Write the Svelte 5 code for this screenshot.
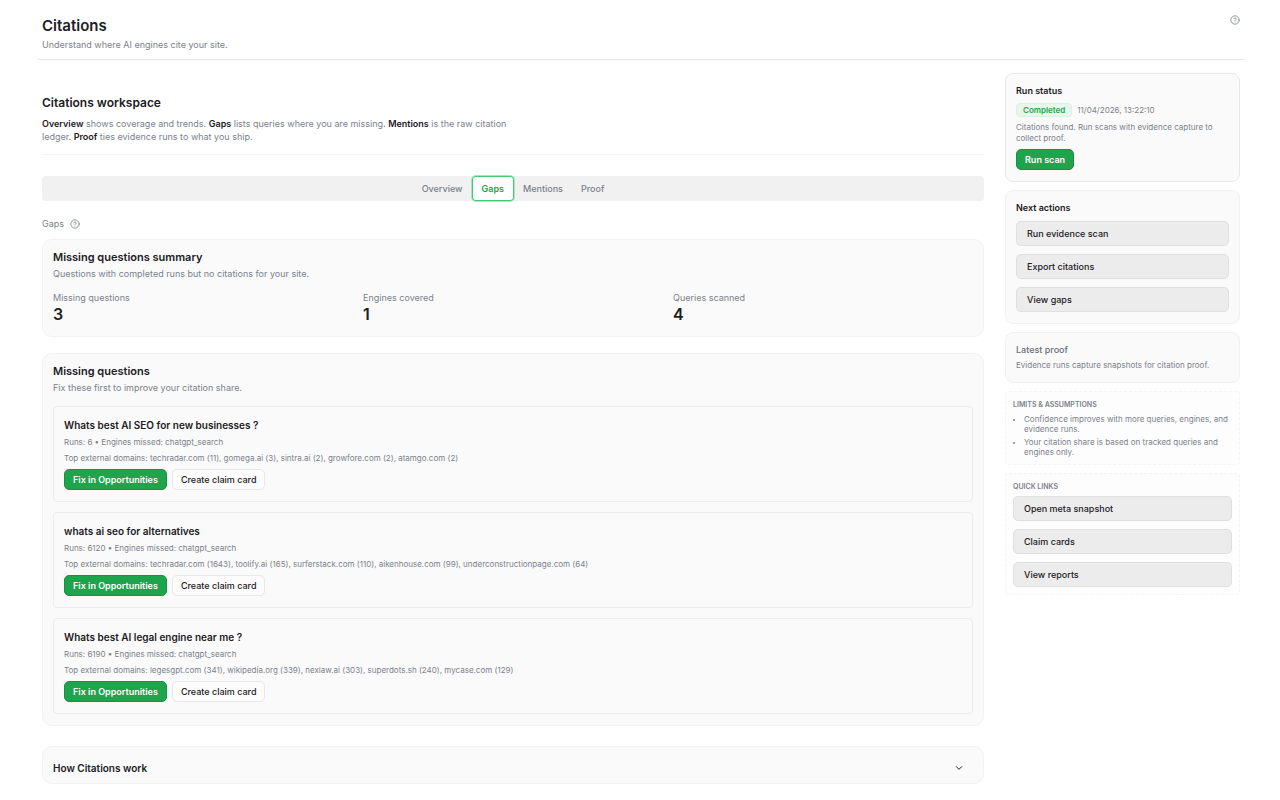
<script lang="ts">
  interface Question {
    title: string;
    runs: number;
    engines: string;
    domains: string;
  }

  const tabs = ['Overview', 'Gaps', 'Mentions', 'Proof'];
  let activeTab = $state('Gaps');

  const stats = [
    { label: 'Missing questions', value: 3 },
    { label: 'Engines covered', value: 1 },
    { label: 'Queries scanned', value: 4 },
  ];

  const questions: Question[] = [
    {
      title: 'Whats best AI SEO for new businesses ?',
      runs: 6,
      engines: 'chatgpt_search',
      domains: 'techradar.com (11), gomega.ai (3), sintra.ai (2), growfore.com (2), atamgo.com (2)',
    },
    {
      title: 'whats ai seo for alternatives',
      runs: 6120,
      engines: 'chatgpt_search',
      domains:
        'techradar.com (1643), toolify.ai (165), surferstack.com (110), aikenhouse.com (99), underconstructionpage.com (64)',
    },
    {
      title: 'Whats best AI legal engine near me ?',
      runs: 6190,
      engines: 'chatgpt_search',
      domains:
        'legesgpt.com (341), wikipedia.org (339), nexlaw.ai (303), superdots.sh (240), mycase.com (129)',
    },
  ];

  const nextActions = ['Run evidence scan', 'Export citations', 'View gaps'];
  const quickLinks = ['Open meta snapshot', 'Claim cards', 'View reports'];
</script>

{#snippet helpIcon()}
  <svg class="help-icon" viewBox="0 0 24 24" fill="none" stroke="currentColor" stroke-width="2" stroke-linecap="round" stroke-linejoin="round" aria-hidden="true">
    <circle cx="12" cy="12" r="10" />
    <path d="M9.09 9a3 3 0 0 1 5.83 1c0 2-3 3-3 3" />
    <path d="M12 17h.01" />
  </svg>
{/snippet}

<div class="page">
  <header class="page-head">
    <div>
      <h1>Citations</h1>
      <p class="sub">Understand where AI engines cite your site.</p>
    </div>
    <button class="help" aria-label="Help">{@render helpIcon()}</button>
  </header>

  <div class="layout">
    <main>
      <section class="intro">
        <h2>Citations workspace</h2>
        <p>
          <strong>Overview</strong> shows coverage and trends. <strong>Gaps</strong> lists queries where you are missing.
          <strong>Mentions</strong> is the raw citation ledger. <strong>Proof</strong> ties evidence runs to what you ship.
        </p>
      </section>

      <div class="tabs" role="tablist">
        {#each tabs as tab (tab)}
          <button
            class="tab"
            class:active={tab === activeTab}
            role="tab"
            aria-selected={tab === activeTab}
            onclick={() => (activeTab = tab)}>{tab}</button>
        {/each}
      </div>

      <div class="section-label">
        <span>Gaps</span>
        <button class="help" aria-label="About gaps">{@render helpIcon()}</button>
      </div>

      <section class="card">
        <h3>Missing questions summary</h3>
        <p class="sub">Questions with completed runs but no citations for your site.</p>
        <dl class="stats">
          {#each stats as s (s.label)}
            <div>
              <dt>{s.label}</dt>
              <dd>{s.value}</dd>
            </div>
          {/each}
        </dl>
      </section>

      <section class="card missing">
        <h3>Missing questions</h3>
        <p class="sub">Fix these first to improve your citation share.</p>
        <ul class="questions">
          {#each questions as q (q.title)}
            <li>
              <h4>{q.title}</h4>
              <p class="meta">Runs: {q.runs} • Engines missed: {q.engines}</p>
              <p class="meta">Top external domains: {q.domains}</p>
              <div class="actions">
                <button class="btn primary">Fix in Opportunities</button>
                <button class="btn">Create claim card</button>
              </div>
            </li>
          {/each}
        </ul>
      </section>

      <details class="card how">
        <summary>
          <span>How Citations work</span>
          <svg class="chevron" viewBox="0 0 24 24" fill="none" stroke="currentColor" stroke-width="3" stroke-linecap="round" stroke-linejoin="round" aria-hidden="true">
            <path d="m4 8 8 8 8-8" />
          </svg>
        </summary>
      </details>
    </main>

    <aside>
      <section class="side-card status">
        <h5>Run status</h5>
        <div class="run">
          <span class="badge">Completed</span>
          <span class="meta">11/04/2026, 13:22:10</span>
        </div>
        <p class="note">Citations found. Run scans with evidence capture to collect proof.</p>
        <button class="btn primary">Run scan</button>
      </section>

      <section class="side-card">
        <h5>Next actions</h5>
        <div class="stack">
          {#each nextActions as action (action)}
            <button class="row-btn">{action}</button>
          {/each}
        </div>
      </section>

      <section class="side-card proof">
        <h5>Latest proof</h5>
        <p class="note">Evidence runs capture snapshots for citation proof.</p>
      </section>

      <section class="side-box">
        <h6>Limits &amp; assumptions</h6>
        <ul class="limits">
          <li>Confidence improves with more queries, engines, and evidence runs.</li>
          <li>Your citation share is based on tracked queries and engines only.</li>
        </ul>
      </section>

      <section class="side-box">
        <h6>Quick links</h6>
        <div class="stack">
          {#each quickLinks as link (link)}
            <button class="row-btn">{link}</button>
          {/each}
        </div>
      </section>
    </aside>
  </div>
</div>

<style>
  :global(body) {
    margin: 0;
    background: #fff;
  }
  :global(h1, h2, h3, h4, h5, h6, p, ul, dl, dd) {
    margin: 0;
    padding: 0;
  }
  .page {
    --text: #1c2024;
    --muted: #7b828b;
    --line: #ececec;
    --soft: #fafafa;
    --green: #1ea44c;
    font-family: Inter, 'Liberation Sans', sans-serif;
    font-size: 9px;
    line-height: 12px;
    color: var(--text);
    padding: 0 36px 16px 38px;
  }
  button {
    font: inherit;
    color: inherit;
    cursor: pointer;
  }
  .page-head {
    display: flex;
    justify-content: space-between;
    align-items: flex-start;
    padding: 15px 4px 8px;
    border-bottom: 1px solid #e6e6e8;
  }
  h1 {
    font-size: 15px;
    line-height: 21px;
    font-weight: 600;
  }
  .sub {
    margin-top: 4px;
    color: var(--muted);
  }
  .page-head .sub {
    margin-top: 3px;
  }
  .help {
    display: flex;
    padding: 0;
    border: 0;
    background: none;
    color: var(--muted);
  }
  .help-icon {
    width: 10px;
    height: 10px;
  }
  .layout {
    display: grid;
    grid-template-columns: minmax(0, 1fr) 235px;
    gap: 21px;
    align-items: start;
    padding: 13px 4px 0;
  }
  .intro {
    padding: 23px 0 11px;
    border-bottom: 1px solid #f5f5f5;
  }
  h2 {
    font-size: 12px;
    line-height: 14px;
    font-weight: 600;
  }
  .intro p {
    max-width: 490px;
    margin-top: 7px;
    line-height: 13px;
    color: var(--muted);
  }
  .intro strong {
    font-weight: 600;
    color: var(--text);
  }
  .tabs {
    display: flex;
    justify-content: center;
    margin-top: 21px;
    border-radius: 4px;
    background: #f1f1f1;
  }
  .tab {
    padding: 5px 9px;
    border: 0;
    border-radius: 4px;
    background: none;
    line-height: 15px;
    font-weight: 500;
    color: var(--muted);
  }
  .tab.active {
    padding: 5px 10px;
    background: #fff;
    box-shadow: inset 0 0 0 1px #43c873, 0 0 0 1px #a9e6bf;
    font-weight: 600;
    color: var(--green);
  }
  .section-label {
    display: flex;
    align-items: center;
    gap: 6px;
    margin: 17px 0 9px;
    color: var(--muted);
  }
  .card {
    padding: 10px 10px 11px;
    border: 1px solid #f2f2f2;
    border-radius: 10px;
    background: var(--soft);
  }
  .missing {
    margin-top: 16px;
  }
  h3 {
    font-size: 11px;
    line-height: 14px;
    font-weight: 600;
  }
  .stats {
    display: grid;
    grid-template-columns: repeat(3, 1fr);
    gap: 10px;
    margin-top: 12px;
  }
  dt {
    color: var(--muted);
  }
  dd {
    font-size: 16px;
    line-height: 21px;
    font-weight: 600;
  }
  .questions {
    display: grid;
    gap: 10px;
    margin-top: 12px;
    list-style: none;
  }
  .questions li {
    padding: 11px 10px;
    border: 1px solid var(--line);
    border-radius: 4px;
  }
  h4 {
    font-size: 10px;
    line-height: 14px;
    font-weight: 600;
  }
  .meta {
    font-size: 8px;
    line-height: 12px;
    color: var(--muted);
  }
  .questions .meta {
    margin-top: 4px;
  }
  .actions {
    display: flex;
    gap: 5px;
    margin-top: 5px;
  }
  .btn {
    padding: 3px 8px;
    border: 1px solid #e8e8e8;
    border-radius: 5px;
    background: #fcfcfc;
    line-height: 13px;
    font-weight: 500;
  }
  .btn.primary {
    border-color: #17923f;
    background: var(--green);
    font-weight: 600;
    color: #fff;
  }
  .how {
    margin-top: 20px;
    padding: 0;
  }
  .how summary {
    display: flex;
    justify-content: space-between;
    align-items: center;
    padding: 14px 20px 8px 10px;
    font-size: 10px;
    line-height: 14px;
    font-weight: 600;
    list-style: none;
    cursor: pointer;
  }
  .chevron {
    width: 8px;
    height: 8px;
  }
  aside {
    display: grid;
    gap: 8px;
  }
  .side-card {
    padding: 10px 10px 11px;
    border: 1px solid #f1f1f1;
    border-radius: 8px;
    background: var(--soft);
  }
  .side-card.status {
    border-color: #e8e8e8;
  }
  h5 {
    font-size: 9px;
    line-height: 13px;
    font-weight: 600;
  }
  .run {
    display: flex;
    align-items: center;
    gap: 5px;
    margin-top: 6px;
  }
  .badge {
    padding: 0 6px;
    border: 1px solid #d8f3e0;
    border-radius: 4px;
    background: #e6f8ec;
    font-size: 8px;
    line-height: 12px;
    font-weight: 600;
    color: var(--green);
  }
  .note {
    font-size: 8px;
    line-height: 11px;
    color: var(--muted);
  }
  .status .note {
    margin: 5px 0;
  }
  .stack {
    display: grid;
    gap: 8px;
    margin-top: 7px;
  }
  .row-btn {
    padding: 5px 10px;
    border: 1px solid #dfdfdf;
    border-radius: 5px;
    background: #ececec;
    line-height: 13px;
    font-weight: 500;
    text-align: left;
  }
  .proof h5 {
    font-weight: 500;
    color: #666d76;
  }
  .proof .note {
    margin-top: 4px;
  }
  .side-box {
    padding: 7px;
    border: 1px dashed #f4f4f4;
    border-radius: 4px;
    background: #fdfdfd;
  }
  h6 {
    font-size: 7px;
    line-height: 11px;
    font-weight: 600;
    text-transform: uppercase;
    color: var(--muted);
  }
  .side-box .stack {
    margin-top: 4px;
  }
  .limits {
    margin-top: 4px;
    padding-left: 11px;
    font-size: 8px;
    line-height: 10px;
    color: var(--muted);
  }
  .limits li::marker {
    font-size: 7px;
  }
  .limits li + li {
    margin-top: 3px;
  }
</style>
